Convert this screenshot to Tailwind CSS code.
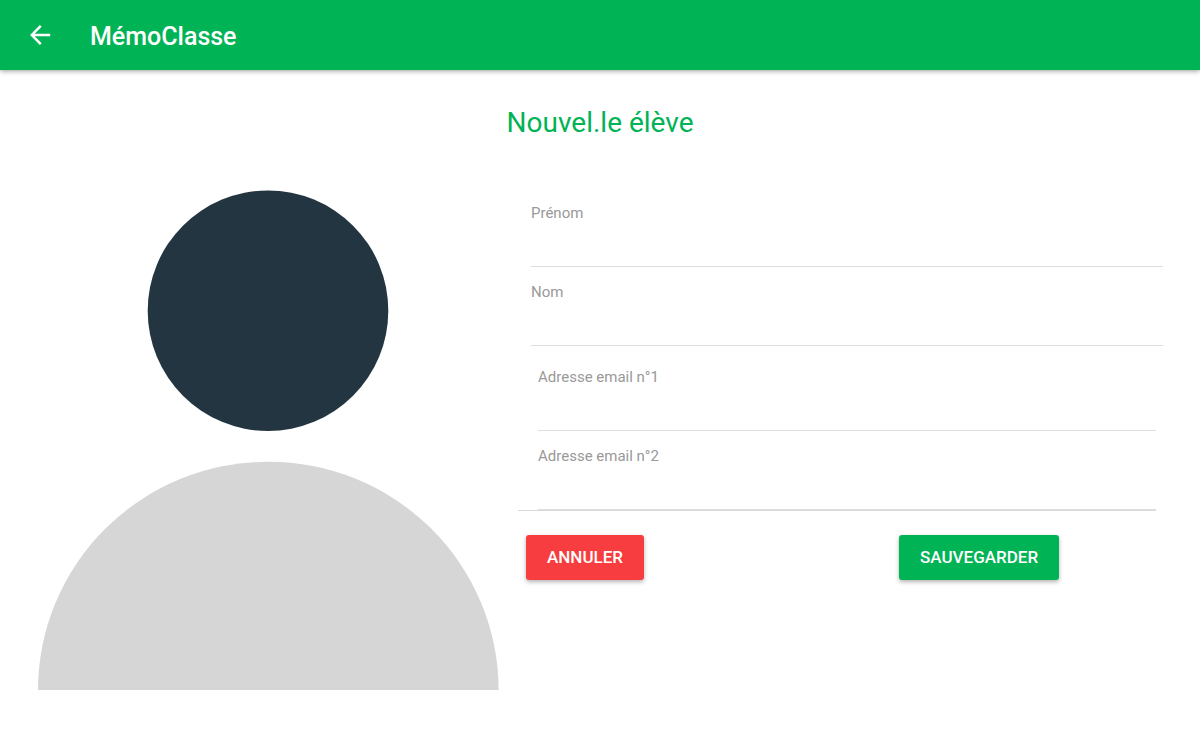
<!DOCTYPE html>
<html lang="fr">
<head>
<meta charset="utf-8">
<meta name="viewport" content="width=device-width, initial-scale=1">
<title>MémoClasse</title>
<script src="https://cdn.jsdelivr.net/npm/@tailwindcss/browser@4"></script>
</head>
<body class="min-h-screen bg-white font-['Roboto',sans-serif] text-[#222]">
<header class="flex h-[70px] items-center bg-[#00b355] pl-[25px] text-white shadow-[0_1px_5px_rgba(0,0,0,0.4)]">
  <a href="#" aria-label="Retour" class="block size-[30px]">
    <svg viewBox="0 0 30 30" class="size-[30px]" fill="none" stroke="currentColor" stroke-width="2.5" aria-hidden="true"><path d="M25.2 15H7.2M15.8 5.8 6.8 15l9 9.2"/></svg>
  </a>
  <h1 class="ml-[35px] pt-[3px] text-[25px] leading-[30px] font-medium">MémoClasse</h1>
</header>
<main class="pt-[35px] pr-6 pb-10 pl-[38px]">
  <h2 class="mr-[14px] mb-[49px] text-center text-[28px] leading-9 text-[#00b355]">Nouvel.le élève</h2>
  <div class="grid grid-cols-[461fr_658fr] items-start gap-[19px]">
    <svg viewBox="0 0 461 500" class="block w-full" role="img" aria-label="Photo de l’élève">
      <circle cx="230" cy="120.7" r="120.3" fill="#233540"/>
      <path d="M0 500A230.3 228.3 0 0 1 460.6 500Z" fill="#d6d6d6"/>
    </svg>
    <form>
      <div class="mr-5 border-b border-[#dadada]">
        <div class="-mr-[7px] ml-[13px]">
          <div class="flex h-[77px] flex-col border-b border-[#dedede] pt-[11px]">
            <label for="prenom" class="text-[15px] leading-6 text-[#999]">Prénom</label>
            <input id="prenom" type="text" class="w-full flex-1 text-base outline-none">
          </div>
          <div class="flex h-[79px] flex-col border-b border-[#dedede] pt-[13px]">
            <label for="nom" class="text-[15px] leading-6 text-[#999]">Nom</label>
            <input id="nom" type="text" class="w-full flex-1 text-base outline-none">
          </div>
        </div>
        <div class="ml-5 pt-[6px]">
          <div class="flex h-[79px] flex-col border-b border-[#dedede] pt-[13px]">
            <label for="email1" class="text-[15px] leading-6 text-[#999]">Adresse email n°1</label>
            <input id="email1" type="email" class="w-full flex-1 text-base outline-none">
          </div>
          <div class="flex h-[79px] flex-col border-b border-[#dedede] pt-[13px]">
            <label for="email2" class="text-[15px] leading-6 text-[#999]">Adresse email n°2</label>
            <input id="email2" type="email" class="w-full flex-1 text-base outline-none">
          </div>
        </div>
      </div>
      <div class="grid grid-cols-[373fr_277fr] justify-items-start pt-6 pl-2">
        <button type="button" class="h-[45px] rounded-[3px] bg-[#f73d3f] px-[21px] text-[17px] font-medium text-white shadow-[0_2px_4px_rgba(0,0,0,0.3)]">ANNULER</button>
        <button type="submit" class="h-[45px] rounded-[3px] bg-[#00b355] px-[21px] text-[17px] font-medium text-white shadow-[0_2px_4px_rgba(0,0,0,0.3)]">SAUVEGARDER</button>
      </div>
    </form>
  </div>
</main>
</body>
</html>
